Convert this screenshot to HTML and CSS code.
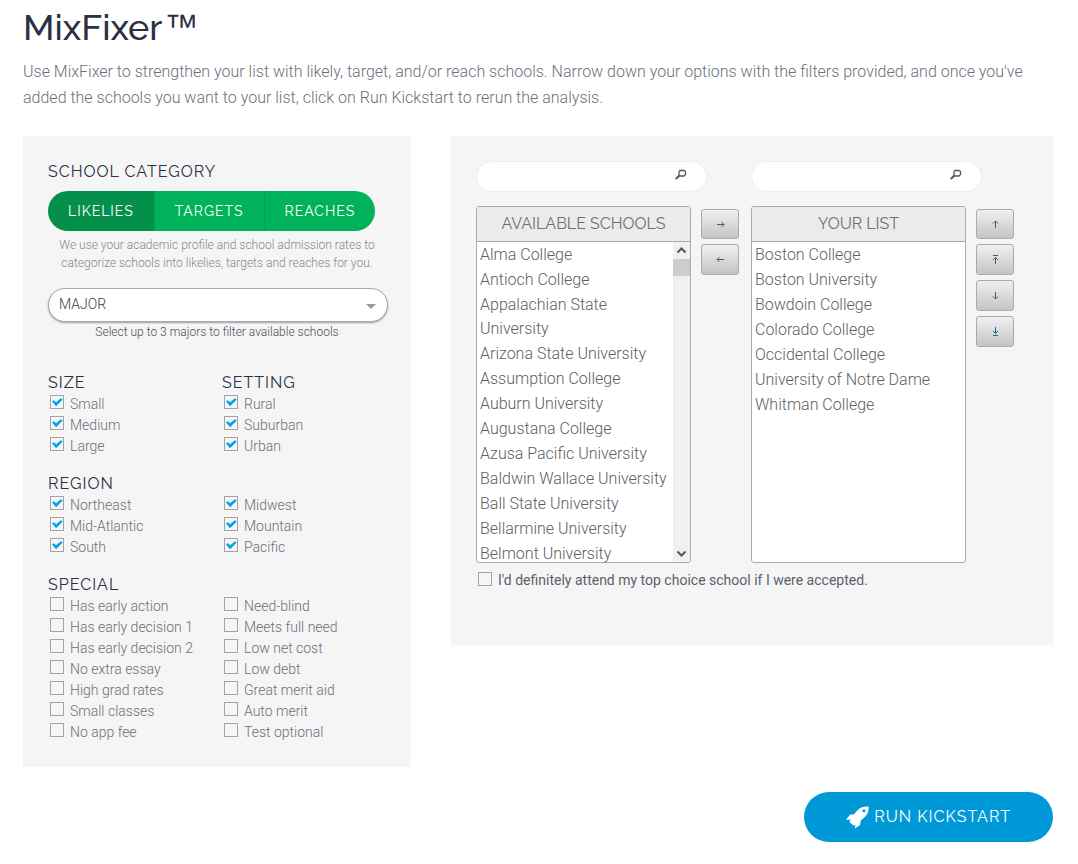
FILE: index.html
```html
<!DOCTYPE html>
<html lang="en">
<head>
<meta charset="utf-8">
<meta name="viewport" content="width=device-width, initial-scale=1">
<title>MixFixer</title>
<link rel="stylesheet" href="styles.css">
</head>
<body>
<main class="page">
  <h1 class="title">MixFixer<span class="title-mark">™</span></h1>
  <p class="intro">Use MixFixer to strengthen your list with likely, target, and/or reach schools. Narrow down your options with the filters provided, and once you've added the schools you want to your list, click on Run Kickstart to rerun the analysis.</p>

  <div class="columns">
    <section class="panel filters">
      <h2 class="heading">School category</h2>
      <div class="segments">
        <button type="button" class="segment is-active" aria-pressed="true">Likelies</button>
        <button type="button" class="segment" aria-pressed="false">Targets</button>
        <button type="button" class="segment" aria-pressed="false">Reaches</button>
      </div>
      <p class="note">We use your academic profile and school admission rates to categorize schools into likelies, targets and reaches for you.</p>
      <div class="major">
        <select id="major" class="major-select" aria-label="Major"><option>MAJOR</option></select>
        <svg class="major-caret" viewBox="0 0 10 5" aria-hidden="true"><path d="M0 0h10L5 5z"/></svg>
      </div>
      <label class="hint" for="major">Select up to 3 majors to filter available schools</label>

      <div class="groups">
        <div class="pair">
          <fieldset class="group">
            <legend class="heading">Size</legend>
            <label class="check"><input type="checkbox" checked>Small</label>
            <label class="check"><input type="checkbox" checked>Medium</label>
            <label class="check"><input type="checkbox" checked>Large</label>
          </fieldset>
          <fieldset class="group">
            <legend class="heading">Setting</legend>
            <label class="check"><input type="checkbox" checked>Rural</label>
            <label class="check"><input type="checkbox" checked>Suburban</label>
            <label class="check"><input type="checkbox" checked>Urban</label>
          </fieldset>
        </div>
        <fieldset class="group">
          <legend class="heading">Region</legend>
          <div class="pair">
            <div>
              <label class="check"><input type="checkbox" checked>Northeast</label>
              <label class="check"><input type="checkbox" checked>Mid-Atlantic</label>
              <label class="check"><input type="checkbox" checked>South</label>
            </div>
            <div>
              <label class="check"><input type="checkbox" checked>Midwest</label>
              <label class="check"><input type="checkbox" checked>Mountain</label>
              <label class="check"><input type="checkbox" checked>Pacific</label>
            </div>
          </div>
        </fieldset>
        <fieldset class="group">
          <legend class="heading">Special</legend>
          <div class="pair">
            <div>
              <label class="check"><input type="checkbox">Has early action</label>
              <label class="check"><input type="checkbox">Has early decision 1</label>
              <label class="check"><input type="checkbox">Has early decision 2</label>
              <label class="check"><input type="checkbox">No extra essay</label>
              <label class="check"><input type="checkbox">High grad rates</label>
              <label class="check"><input type="checkbox">Small classes</label>
              <label class="check"><input type="checkbox">No app fee</label>
            </div>
            <div>
              <label class="check"><input type="checkbox">Need-blind</label>
              <label class="check"><input type="checkbox">Meets full need</label>
              <label class="check"><input type="checkbox">Low net cost</label>
              <label class="check"><input type="checkbox">Low debt</label>
              <label class="check"><input type="checkbox">Great merit aid</label>
              <label class="check"><input type="checkbox">Auto merit</label>
              <label class="check"><input type="checkbox">Test optional</label>
            </div>
          </div>
        </fieldset>
      </div>
    </section>

    <section class="panel picker">
      <div class="lists">
        <div class="list-column">
          <div class="search">
            <input type="search" class="search-input" aria-label="Search available schools">
            <svg class="search-icon" viewBox="0 0 12 11" aria-hidden="true"><path class="lens" d="M5 1.500h4l1.500 1v3l-1.500 1.500h-4l-1-1v-3z"/><path class="handle" d="M4.500 6.500L.7 10"/></svg>
          </div>
          <div class="list-row">
            <div class="list-box">
              <h3 class="list-title">Available Schools</h3>
              <div class="list-body">
                <ul class="schools">
                  <li>Alma College</li>
                  <li>Antioch College</li>
                  <li>Appalachian State University</li>
                  <li>Arizona State University</li>
                  <li>Assumption College</li>
                  <li>Auburn University</li>
                  <li>Augustana College</li>
                  <li>Azusa Pacific University</li>
                  <li>Baldwin Wallace University</li>
                  <li>Ball State University</li>
                  <li>Bellarmine University</li>
                  <li>Belmont University</li>
                </ul>
                <div class="scrollbar">
                  <button type="button" class="scroll-button" aria-label="Scroll up"><svg viewBox="0 0 17 17"><path d="M4.500 10.500l4-4 4 4"/></svg></button>
                  <div class="thumb"></div>
                  <button type="button" class="scroll-button scroll-down" aria-label="Scroll down"><svg viewBox="0 0 17 17"><path d="M4.500 6.500l4 4 4-4"/></svg></button>
                </div>
              </div>
            </div>
            <div class="movers">
              <button type="button" class="mover" aria-label="Add"><svg viewBox="0 0 9 9"><path d="M1 4.500h7M5.500 2L8 4.500 5.500 7"/></svg></button>
              <button type="button" class="mover" aria-label="Remove"><svg viewBox="0 0 9 9"><path d="M8 4.500H1M3.500 2L1 4.500 3.500 7"/></svg></button>
            </div>
          </div>
        </div>

        <div class="list-column">
          <div class="search">
            <input type="search" class="search-input" aria-label="Search your list">
            <svg class="search-icon" viewBox="0 0 12 11" aria-hidden="true"><path class="lens" d="M5 1.500h4l1.500 1v3l-1.500 1.500h-4l-1-1v-3z"/><path class="handle" d="M4.500 6.500L.7 10"/></svg>
          </div>
          <div class="list-row">
            <div class="list-box">
              <h3 class="list-title">Your List</h3>
              <div class="list-body">
                <ul class="schools">
                  <li>Boston College</li>
                  <li>Boston University</li>
                  <li>Bowdoin College</li>
                  <li>Colorado College</li>
                  <li>Occidental College</li>
                  <li>University of Notre Dame</li>
                  <li>Whitman College</li>
                </ul>
              </div>
            </div>
            <div class="movers">
              <button type="button" class="mover" aria-label="Move up"><svg viewBox="0 0 9 9"><path d="M4.500 8V1M2 3.500L4.500 1 7 3.500"/></svg></button>
              <button type="button" class="mover" aria-label="Move to top"><svg viewBox="0 0 9 9"><path d="M2 .5h5M4.500 9V2.500M2 5l2.500-2.500L7 5"/></svg></button>
              <button type="button" class="mover" aria-label="Move down"><svg viewBox="0 0 9 9"><path d="M4.500 1v7M2 5.500L4.500 8 7 5.500"/></svg></button>
              <button type="button" class="mover" aria-label="Move to bottom"><svg viewBox="0 0 9 9"><path d="M2 8.500h5M4.500 0v6.500M2 4l2.500 2.500L7 4"/></svg></button>
            </div>
          </div>
        </div>
      </div>
      <label class="check commit"><input type="checkbox">I'd definitely attend my top choice school if I were accepted.</label>
    </section>
  </div>

  <div class="actions">
    <button type="button" class="run">
      <svg class="rocket" viewBox="0 0 24 24" aria-hidden="true"><path fill-rule="evenodd" d="M23.500.5c-5-.3-9 1-12.500 5L8.500 8.500 4 9 0 14.500l5-.5-1.500 2.500 4.500 4 2-1-1 4 5.500-3.500 1-5 3-2.500c4-3.500 5.500-7 5-12zM18.700 3.300a1.600 1.600 0 1 1 0 3.200 1.600 1.600 0 0 1 0-3.200z"/></svg>
      Run Kickstart
    </button>
  </div>
</main>
</body>
</html>
```
FILE: styles.css
```css
* { box-sizing: border-box; }

body {
  margin: 0;
  background: #fff;
  color: #6b6f7b;
  font: 300 16px/26px Roboto, sans-serif;
}

button, input, select { margin: 0; font: inherit; }

.page { padding: 0 25px 22px 23px; }

.title {
  margin: 0 0 5px;
  color: #2b3144;
  font: 500 36px/54px Raleway, Lato, sans-serif;
}

.title-mark {
  margin-left: 2px;
  font: 400 34px/1 "Liberation Sans", sans-serif;
  vertical-align: 2px;
}

.intro { margin: 0 0 25px; }

.columns {
  display: grid;
  grid-template-columns: 388px minmax(0, 1fr);
  gap: 40px;
  align-items: start;
}

.panel { padding: 25px; background: #f5f5f5; }

.heading {
  margin: 0;
  padding: 0;
  color: #2b3144;
  font: 400 16px/21px Raleway, Lato, sans-serif;
  letter-spacing: 1px;
  text-transform: uppercase;
}

.segments {
  display: inline-flex;
  margin-top: 9px;
  border-radius: 20px;
  overflow: hidden;
  vertical-align: top;
}

.segment {
  height: 40px;
  padding: 0 20px;
  border: 0;
  border-left: 1px solid #05a351;
  background: #00b259;
  color: #fff;
  font: 400 14px/40px Raleway, Lato, sans-serif;
  letter-spacing: 1px;
  text-transform: uppercase;
}

.segment.is-active { border-left: 0; background: #04904a; }

.note {
  margin: 5px 0 16px;
  padding: 0 10px;
  color: #85878d;
  font-size: 12px;
  line-height: 18px;
  text-align: center;
}

.major { position: relative; margin-right: -2px; }

.major-select {
  display: block;
  width: 100%;
  height: 34px;
  padding: 0 10px 2px;
  appearance: none;
  border: 1px solid #aaa;
  border-radius: 17px;
  background: #fff;
  box-shadow: 0 1px 2px rgba(0, 0, 0, .35);
  color: #3d3f45;
  font-size: 14px;
}

.major-caret {
  position: absolute;
  top: 16px;
  right: 12px;
  width: 10px;
  height: 5px;
  fill: #999;
}

.hint {
  display: block;
  margin-top: 1px;
  color: #4c4f58;
  font-size: 12px;
  line-height: 18px;
  text-align: center;
}

.groups { display: grid; gap: 17px; margin-top: 31px; }

.pair { display: grid; grid-template-columns: 174px 1fr; }

.group { min-width: 0; margin: 0; padding: 0; border: 0; }

.check {
  display: flex;
  gap: 6px;
  height: 21px;
  padding-left: 2px;
  font-size: 14px;
  line-height: 23px;
}

.check input {
  flex: none;
  width: 14px;
  height: 14px;
  margin-top: 2px;
  appearance: none;
  border: 1px solid #a3a3a3;
  background: transparent;
}

.check input:checked::before {
  content: "";
  display: block;
  width: 12px;
  height: 12px;
  background: #00a2e8;
  clip-path: polygon(8% 44%, 24% 36%, 42% 52%, 82% 18%, 98% 30%, 42% 86%);
}

.picker { padding-bottom: 54px; }

.lists { display: flex; flex-wrap: wrap; gap: 12px; }

.list-column { flex: 0 0 263px; }

.search { position: relative; width: 231px; }

.search-input {
  display: block;
  width: 100%;
  height: 31px;
  padding: 0 36px 0 12px;
  appearance: none;
  border: 1px solid #eee;
  border-radius: 16px;
  background: #fff;
}

.search-icon {
  position: absolute;
  top: 8px;
  right: 20px;
  width: 12px;
  height: 11px;
  fill: none;
  stroke: #555;
}

.lens { stroke-width: 1.300; }
.handle { stroke-width: 2; }

.list-row { display: flex; gap: 10px; margin-top: 14px; }

.list-box {
  flex: 1;
  border: 1px solid #aaa;
  border-radius: 3px;
  background: #fff;
  overflow: hidden;
}

.list-title {
  margin: 0;
  border-bottom: 1px solid #aaa;
  background: #ebebeb;
  font: 400 16px/34px Raleway, Lato, sans-serif;
  text-align: center;
  text-transform: uppercase;
}

.list-body { display: flex; height: 320px; }

.schools {
  flex: 1;
  margin: 0;
  padding: 1px 0 0 3px;
  list-style: none;
  overflow: hidden;
  color: #606060;
  line-height: 24px;
}

.schools li { padding-bottom: 1px; }

.scrollbar { display: flex; flex-direction: column; width: 17px; background: #f0f0f0; }

.scroll-button { height: 17px; padding: 0; border: 0; background: none; }

.scroll-button svg {
  display: block;
  width: 17px;
  height: 17px;
  fill: none;
  stroke: #555;
  stroke-width: 2;
}

.scroll-down { margin-top: auto; }

.thumb { height: 17px; background: #cdcdcd; }

.movers { display: grid; gap: 5px; align-content: start; width: 38px; padding-top: 3px; }

.mover {
  display: grid;
  place-items: center;
  height: 31px;
  padding: 0;
  border: 1px solid #aaa;
  border-radius: 3px;
  background: linear-gradient(#f0f0f0, #c4c4c4);
}

.mover:first-child { height: 30px; }

.mover svg { width: 9px; height: 9px; fill: none; stroke: #2f6482; }

.commit { margin-top: 7px; font-weight: 400; line-height: 21px; color: #5c606c; }

.actions { display: flex; justify-content: flex-end; margin-top: 25px; }

.run {
  display: flex;
  align-items: center;
  gap: 5px;
  height: 50px;
  padding: 0 42px;
  border: 0;
  border-radius: 25px;
  background: #0099d8;
  color: #fff;
  font: 400 16px/50px Raleway, Lato, sans-serif;
  letter-spacing: 1px;
  text-transform: uppercase;
}

.rocket { width: 23px; height: 23px; fill: #fff; }
```
